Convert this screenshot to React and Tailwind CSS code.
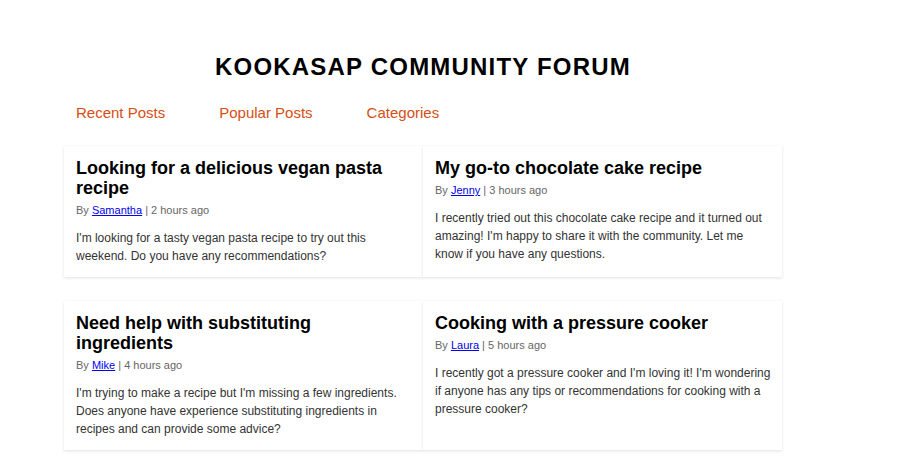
const tabs = ["Recent Posts", "Popular Posts", "Categories"];

const posts = [
  {
    title: "Looking for a delicious vegan pasta recipe",
    author: "Samantha",
    time: "2 hours ago",
    body: "I'm looking for a tasty vegan pasta recipe to try out this weekend. Do you have any recommendations?",
  },
  {
    title: "My go-to chocolate cake recipe",
    author: "Jenny",
    time: "3 hours ago",
    body: "I recently tried out this chocolate cake recipe and it turned out amazing! I'm happy to share it with the community. Let me know if you have any questions.",
  },
  {
    title: "Need help with substituting ingredients",
    author: "Mike",
    time: "4 hours ago",
    body: "I'm trying to make a recipe but I'm missing a few ingredients. Does anyone have experience substituting ingredients in recipes and can provide some advice?",
  },
  {
    title: "Cooking with a pressure cooker",
    author: "Laura",
    time: "5 hours ago",
    body: "I recently got a pressure cooker and I'm loving it! I'm wondering if anyone has any tips or recommendations for cooking with a pressure cooker?",
  },
];

function Post({ title, author, time, body }) {
  return (
    <article className="bg-white py-3 pr-[10px] pl-3 shadow-[0_1px_3px_rgba(0,0,0,0.12)]">
      <h2 className="pr-2 text-[18px] leading-5 font-bold text-black">{title}</h2>
      <p className="mt-1 text-[11px] leading-4 text-[#666]">
        By{" "}
        <a href="#" className="text-[#0000ee] underline">
          {author}
        </a>{" "}
        | {time}
      </p>
      <p className="mt-[11px] text-[12px] leading-[18px] text-[#333]">{body}</p>
    </article>
  );
}

export default function App() {
  return (
    <main className="mr-[122px] ml-16 pt-[52px] pb-2 font-['Liberation_Sans',Arial,sans-serif]">
      <h1 className="text-center text-[24px] leading-[30px] font-bold tracking-wider text-black uppercase">
        Kookasap Community Forum
      </h1>
      <nav className="mt-[21px] flex gap-[54px] px-3 text-[15px] leading-5 text-[#d64e14]">
        {tabs.map((tab) => (
          <a key={tab} href="#">
            {tab}
          </a>
        ))}
      </nav>
      <section className="mt-[23px] grid grid-cols-2 gap-y-6">
        {posts.map((post) => (
          <Post key={post.title} {...post} />
        ))}
      </section>
    </main>
  );
}
